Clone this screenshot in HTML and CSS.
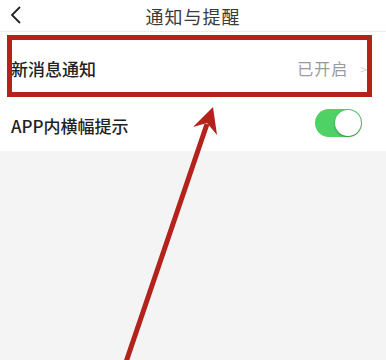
FILE: index.html
```html
<!DOCTYPE html>
<html lang="zh-cn">
<head>
	<meta charset="UTF-8">
	<title>通知与提醒</title>
	<link rel="stylesheet" href="styles.css">
</head>
<body>
	<div id="page">
		<div class="nav">
			<a class="back" href="javascript:;">
				<svg width="14" height="18" viewBox="0 0 14 18"><path d="M11 1 L3 9 L11 17" fill="none" stroke="#222" stroke-width="1.8"/></svg>
			</a>
			<h1>通知与提醒</h1>
		</div>
		<ul class="list">
			<li class="row row-first">
				<span class="label">新消息通知</span>
				<span class="value">已开启</span>
				<span class="more">&gt;</span>
			</li>
			<li class="row row-second">
				<span class="label">APP内横幅提示</span>
				<span class="switch on"><i></i></span>
			</li>
		</ul>
		<div class="mark-box"></div>
		<svg class="mark-arrow" width="386" height="360" viewBox="0 0 386 360">
			<line x1="126" y1="362" x2="207" y2="124" stroke="#b3221b" stroke-width="5"/>
			<polygon points="213,107 217,135 207,123 193,127" fill="#b3221b"/>
		</svg>
	</div>
</body>
</html>
```

FILE: styles.css
```css
html,body {
	margin: 0;
	padding: 0;
	background: #f4f4f4;
}
#page {
	position: relative;
	height: 360px;
	overflow: hidden;
	font-family: "Noto Sans CJK SC", "Noto Sans", sans-serif;
}
.nav {
	display: flex;
	align-items: center;
	justify-content: center;
	height: 31px;
	background: #fff;
	border-bottom: 1px solid #ececec;
	position: relative;
}
.nav h1 {
	margin: 0;
	font-size: 18px;
	font-weight: 400;
	color: #3a3a3a;
	letter-spacing: 1px;
}
.back {
	position: absolute;
	left: 9px;
	top: 6px;
	display: block;
	line-height: 0;
}
.list {
	margin: 0;
	padding: 0;
	background: #fff;
}
li { list-style: none; }
.row {
	display: flex;
	align-items: center;
	padding: 0 11px;
}
.row-first { height: 72px; padding-right: 19px; }
.row-second { height: 43px; padding-bottom: 4px; }
.label {
	flex: 1;
	font-size: 17px;
	font-weight: 500;
	color: #222;
}
.value {
	font-size: 16px;
	color: #9a9a9a;
	letter-spacing: 1px;
}
.more {
	margin-left: 12px;
	font-size: 12px;
	color: #d6d6d6;
}
.switch {
	position: relative;
	width: 47px;
	height: 28px;
	margin-right: 13px;
	margin-top: -6px;
	border-radius: 14px;
	background: #4fd165;
}
.switch i {
	position: absolute;
	right: 1px;
	top: 1px;
	width: 26px;
	height: 26px;
	border-radius: 50%;
	background: #fff;
	box-shadow: 0 1px 2px rgba(0,0,0,.35);
}
.mark-box {
	position: absolute;
	left: 7px;
	top: 35px;
	width: 355px;
	height: 52px;
	border: 5px solid #b5221c;
}
.mark-arrow {
	position: absolute;
	left: 0;
	top: 0;
}
```
